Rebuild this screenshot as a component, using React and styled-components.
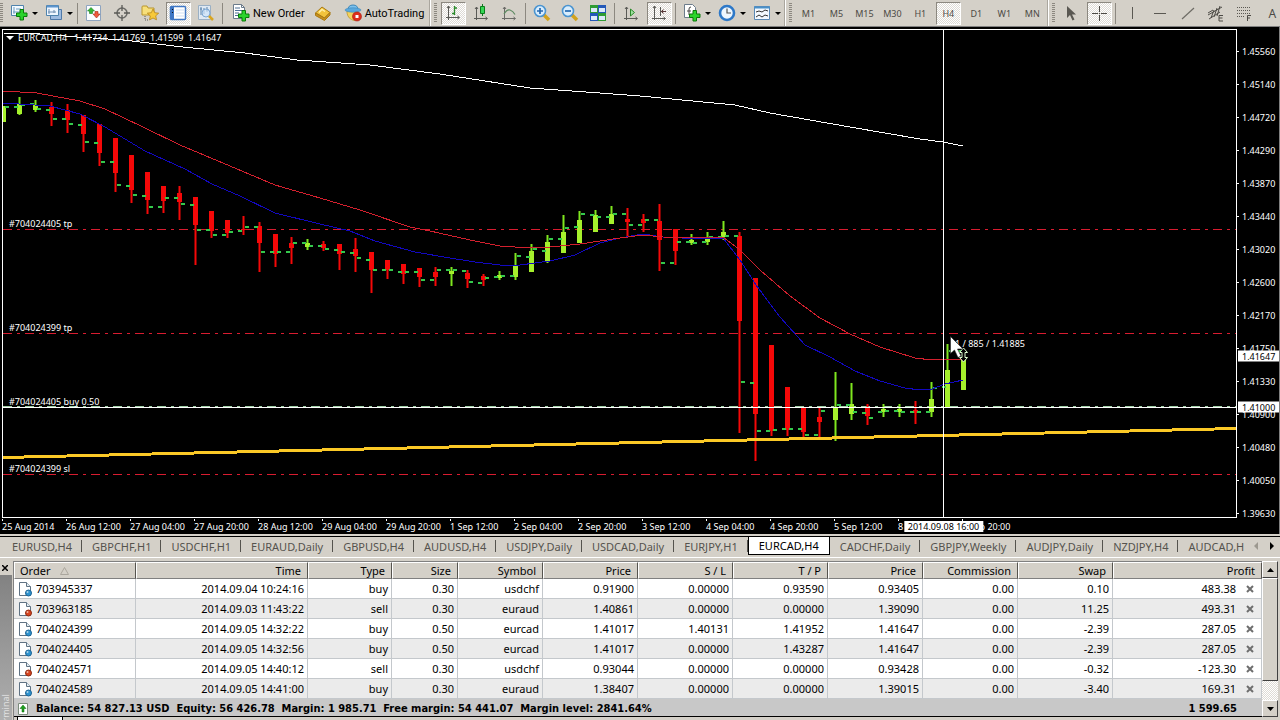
import React from 'react';
import styled, { createGlobalStyle, css } from 'styled-components';

const Global = createGlobalStyle`
  * { box-sizing: border-box; }
  body { margin: 0; background: #d4d0c8; font-family: "Noto Sans", "Open Sans", sans-serif; font-size: 11px; color: #000; }
  button { font: inherit; color: inherit; border: 0; padding: 0; margin: 0; background: none; cursor: default; }
`;

const dither = css`background: repeating-conic-gradient(#fff 0% 25%, #dedbd5 0% 50%) 0 0 / 2px 2px;`;

const Window = styled.div`
  height: 100vh;
  min-height: 480px;
  display: flex;
  flex-direction: column;
  overflow: hidden;
`;

/* ---------- toolbar ---------- */
const Toolbar = styled.header`
  height: 27px;
  flex: none;
  display: flex;
  align-items: center;
  overflow: hidden;
  background: #d4d0c8;
  border-bottom: 1px solid #808080;
`;
const Group = styled.div`
  display: flex;
  align-items: center;
  flex: none;
  height: 26px;
  padding-right: 2px;
  & + & { border-left: 1px solid #fff; box-shadow: -1px 0 0 #aaa69e; padding-left: 3px; }
`;
const Grip = styled.span`
  width: 3px;
  height: 20px;
  margin-right: 2px;
  background: repeating-linear-gradient(#8c8880 0 1px, #d4d0c8 1px 2px);
`;
const Separator = styled.span`
  width: 1px;
  height: 21px;
  margin: 0 2px;
  background: #8c8880;
`;
const Tool = styled.button`
  width: 28px;
  height: 24px;
  display: flex;
  align-items: center;
  justify-content: center;
  font-size: 9px;
  svg { display: block; }
`;
const ToolFace = styled.span`
  min-width: 25px;
  height: 23px;
  display: flex;
  align-items: center;
  justify-content: center;
  color: #4c4a45;
  border: 1px solid transparent;
  ${p => p.$large && css`font-size: 12px;`}
  ${p => p.$on && css`${dither} border-color: #8c8880 #fff #fff #8c8880;`}
`;
const MenuTool = styled.button`
  width: 35px;
  height: 24px;
  display: flex;
  align-items: center;
  gap: 4px;
  padding-left: 5px;
`;
const Caret = styled.span`
  border: 3px solid transparent;
  border-top-color: #000;
  border-bottom: 0;
`;
const TextTool = styled.button`
  height: 24px;
  display: flex;
  align-items: center;
  gap: 3px;
  padding: 0 4px 0 7px;
  font-family: Roboto, "Noto Sans", sans-serif;
  white-space: nowrap;
`;

/* ---------- chart ---------- */
const ChartPane = styled.main`
  flex: 1 1 0;
  min-height: 0;
  display: grid;
  grid-template-columns: 1fr 42px;
  grid-template-rows: 1fr 16px;
  padding: 2px 0 0 2px;
  background: #000;
  color: #fff;
  font-size: 9px;
  line-height: 11px;
  border-right: 1px solid #808080;
  overflow: hidden;
`;
const Plot = styled.section`
  position: relative;
  min-height: 0;
`;
const PlotSvg = styled.svg`
  display: block;
  position: absolute;
  inset: 0;
  width: 100%;
  height: 100%;
`;
const ChartTitle = styled.h1`
  position: absolute;
  top: 3px;
  left: 4px;
  margin: 0;
  display: flex;
  align-items: center;
  gap: 4px;
  font-size: 9px;
  font-weight: 400;
  white-space: pre;
`;
const TitleCaret = styled.span`
  border: 4px solid transparent;
  border-top-color: #fff;
  border-bottom: 0;
`;
const LevelLabel = styled.span`
  position: absolute;
  left: 7px;
  white-space: nowrap;
`;
const Pointer = styled.div`
  position: absolute;
  display: flex;
  white-space: nowrap;
  svg { position: absolute; left: -5px; top: -2px; }
`;
const PriceAxis = styled.aside`
  position: relative;
  display: flex;
  flex-direction: column;
  justify-content: space-between;
  padding-top: 18px;
  line-height: 9px;
`;
const PriceMark = styled.span`
  display: flex;
  align-items: center;
  gap: 3px;
  &::before { content: ''; width: 2px; height: 1px; background: #fff; }
`;
const PriceTag = styled.span`
  position: absolute;
  left: 1px;
  right: 0;
  padding-left: 4px;
  line-height: 11px;
  background: #fff;
  color: #000;
  transform: translateY(-50%);
`;
const TimeAxis = styled.footer`
  position: relative;
  display: flex;
`;
const TimeMark = styled.span`
  flex: 0 0 calc(100% * 64 / 1235);
  padding-top: 1px;
  line-height: 12px;
  white-space: nowrap;
  &::before { content: ''; display: block; width: 1px; height: 2px; background: #fff; }
`;
const TimeTag = styled.span`
  position: absolute;
  top: 3px;
  padding: 0 4px;
  line-height: 11px;
  background: #fff;
  color: #000;
  transform: translateX(-50%);
  white-space: nowrap;
`;

/* ---------- chart tabs ---------- */
const TabStrip = styled.nav`
  flex: none;
  height: 24px;
  display: flex;
  align-items: flex-start;
  padding-top: 3px;
  background: #d4d0c8;
  border-bottom: 1px solid #fff;
  box-shadow: inset 0 2px #d4d0c8, inset 0 3px #000;
`;
const TabList = styled.div`
  flex: 1;
  min-width: 0;
  display: flex;
  overflow: hidden;
  padding-left: 2px;
`;
const ChartTab = styled.button`
  flex: none;
  position: relative;
  height: 18px;
  padding: 0 10px;
  color: #55534e;
  &:not(:last-child)::after {
    content: '';
    position: absolute;
    right: 0;
    top: 3px;
    width: 1px;
    height: 12px;
    background: #55534e;
  }
  ${p => p.$active && css`
    background: #fff;
    color: #000;
    padding: 0 10px;
    border: solid #000;
    border-width: 0 1px 1px;
    &:not(:last-child)::after { display: none; }
  `}
`;
const TabScroll = styled.button`
  flex: none;
  width: 16px;
  height: 18px;
  display: flex;
  align-items: center;
  justify-content: center;
  color: ${p => (p.disabled ? '#9c988f' : '#000')};
`;

/* ---------- terminal ---------- */
const Terminal = styled.section`
  flex: none;
  display: grid;
  grid-template-columns: 13px 1fr;
  height: 162px;
  padding-top: 3px;
  background: #d4d0c8;
`;
const Side = styled.aside`
  display: flex;
  flex-direction: column;
  min-height: 0;
  overflow: hidden;
`;
const CloseTerminal = styled.button`
  height: 14px;
  display: flex;
  align-items: center;
  padding-left: 2px;
`;
const SideTitle = styled.h2`
  flex: 1;
  min-height: 0;
  margin: 0;
  font-size: 9px;
  font-weight: 400;
  line-height: 12px;
  color: #e0e0e0;
  background: linear-gradient(0deg, #828282, #b0b0b0);
  writing-mode: vertical-rl;
  transform: rotate(180deg);
  text-indent: -8px;
  border-left: 1px solid #d4d0c8;
`;
const Body = styled.div`
  display: grid;
  grid-template-columns: 1fr 16px;
  grid-template-rows: auto 1fr;
  padding-right: 2px;
  border-left: 1px solid #808080;
  min-width: 0;
`;
const Ledger = styled.div`
  min-width: 0;
  border-top: 1px solid #808080;
  border-bottom: 1px solid #000;
`;
const Table = styled.table`
  width: 100%;
  table-layout: fixed;
  border-collapse: separate;
  border-spacing: 0;
`;
const HeadCell = styled.th`
  height: 17px;
  padding: 0 6px 0 5px;
  font-weight: 400;
  line-height: 15px;
  text-align: ${p => (p.$left ? 'left' : 'right')};
  white-space: nowrap;
  background: #d4d0c8;
  border: solid;
  border-width: 1px;
  border-color: #fff #55534e #808080 #fff;
  svg { margin-left: 10px; }
`;
const Row = styled.tr`
  background: ${p => (p.$alt ? '#ebebeb' : '#fff')};
`;
const Cell = styled.td`
  height: 20px;
  padding: 0 3px 0 4px;
  line-height: 18px;
  text-align: right;
  white-space: nowrap;
  border-right: 1px solid #c4c8cc;
  border-bottom: 1px solid #c4c8cc;
`;
const CellLine = styled.span`
  display: flex;
  align-items: center;
  gap: ${p => p.$gap}px;
  justify-content: ${p => (p.$end ? 'flex-end' : 'flex-start')};
  padding-right: ${p => (p.$end ? 4 : 0)}px;
`;
const Summary = styled.div`
  height: 17px;
  display: flex;
  align-items: center;
  gap: 8px;
  padding: 2px 25px 0 4px;
  background: #c8c8c8;
  font-family: "DejaVu Sans Condensed", "DejaVu Sans", "Noto Sans", sans-serif;
  font-weight: 700;
  white-space: pre;
`;
const Total = styled.span`
  margin-left: auto;
`;
const ScrollBar = styled.div`
  display: flex;
  flex-direction: column;
  ${dither}
`;
const ScrollButton = styled.button`
  height: 17px;
  flex: none;
  display: flex;
  align-items: center;
  justify-content: center;
  background: #d4d0c8;
  border: 1px solid;
  border-color: #fff #404040 #404040 #fff;
`;
const Thumb = styled.div`
  height: 103px;
  background: #d4d0c8;
  border: 1px solid;
  border-color: #fff #404040 #404040 #fff;
`;
const Track = styled.div` flex: 1; `;
const PanelTabs = styled.div`
  grid-column: 1 / -1;
  padding-left: 3px;
  overflow: hidden;
`;
const PanelTab = styled.div`
  width: 46px;
  height: 6px;
  background: #fff;
  border: solid #000;
  border-width: 0 1px;
`;

/* ---------- icons ---------- */
const Ico = ({ children, w = 18, h = 18 }) => (
  <svg width={w} height={h} viewBox={`0 0 ${w} ${h}`} fill="none" aria-hidden="true">{children}</svg>
);
const Plus = ({ x, y }) => (
  <path transform={`translate(${x} ${y})`} d="M4 .5h3.500v3.500H11v3.500H7.500V11H4V7.500H.5V4H4z" fill="#2bd32b" stroke="#0a7a0a" />
);
const icons = {
  newChart: <Ico><path d="M1.500 1.500h12v10h-12z" fill="#f4faff" stroke="#4f83ad" /><path d="M4 3v7M3 8h8M6 5h5" stroke="#6c9cc2" /><Plus x={6} y={5} /></Ico>,
  profiles: <Ico><path d="M5.500 5.500h11v10h-11z" fill="#9dbbe0" stroke="#4f79a8" /><path d="M1.500 1.500h12v10h-12z" fill="#eef6ff" stroke="#4f83ad" /><path d="M2 2.500h11" stroke="#5c95cf" strokeWidth="2" /><path d="M4 5v5M3 8h8M9 6v3" stroke="#6c8cb0" /></Ico>,
  market: <Ico><path d="M1.500 1.500h14v15h-14z" fill="#fbfcff" stroke="#8ea4c0" /><path d="M6 3.500l3.500 3.500H7.500v2.500h-3V7h-2z" fill="#35b535" stroke="#14801f" strokeWidth=".6" /><path d="M10 7.500h3V10h2l-3.500 4L8 10h2z" fill="#ef5a3c" stroke="#a52a14" strokeWidth=".6" /></Ico>,
  dataWindow: <Ico><circle cx="9" cy="9" r="5" stroke="#6a6a66" strokeWidth="1.500" /><path d="M9 1v6M9 11v6M1 9h6M11 9h6" stroke="#5a5a56" strokeWidth="1.300" /></Ico>,
  navigator: <Ico><path d="M1 3q0-1 1-1h4l1 2h6v7H1z" fill="#f7df7a" stroke="#b9962c" /><path d="M4 12v4h4" stroke="#555" strokeDasharray="1 1" /><path d="M12 5l1.700 3.700 4 .5-3 2.600.8 4L12 14l-3.500 1.900.8-4-3-2.700 4-.5z" fill="#f7c93a" stroke="#b5851a" strokeWidth=".8" /></Ico>,
  terminal: <Ico><rect x="1.500" y="2.500" width="15" height="13" rx="1" fill="#fff" stroke="#3f77c4" strokeWidth="1.500" /><path d="M2 3h3v12H2z" fill="#3f77c4" /><path d="M3.500 5v1M3.500 8v1" stroke="#111" /><path d="M7 6h8M7 9h8M7 12h8" stroke="#cfdff2" /></Ico>,
  tester: <Ico><path d="M1.500 1.500h12v14h-12z" fill="#dfe9f3" stroke="#9bb0c4" /><path d="M4 3v8M7 4v6M10 3v5M3 5h2M9 6h3" stroke="#5d84ab" /><circle cx="9" cy="9" r="4" fill="#cfe4fa" fillOpacity=".7" stroke="#7da7d2" /><path d="M12 12l4 4" stroke="#d9a520" strokeWidth="2.500" /></Ico>,
  newOrder: <Ico><path d="M1.500.5h8l3 3v11h-11z" fill="#fff" stroke="#6b7b8b" /><path d="M9.500.5v3h3" stroke="#6b7b8b" /><path d="M3 4h5M3 6.500h7M3 9h4M3 11.500h3" stroke="#4e6f94" /><Plus x={6} y={6} /></Ico>,
  editor: <Ico><path d="M1.500 9L8 3l8 5.500L10.500 14z" fill="#f2c33c" stroke="#a87a14" /><path d="M1.500 9v2.500l9 5 5.500-5.500V8.500L10.500 14z" fill="#c9901c" stroke="#a87a14" /><path d="M5 8.500L8 5.500l3 2" stroke="#fff0a8" strokeWidth="1.500" /></Ico>,
  auto: <Ico><path d="M3 9q1 6 7 7.500 3-.5 4-4V7H3z" fill="#f3d25c" stroke="#b78f24" strokeWidth=".7" /><path d="M4 6q0-5 5-5t5 5z" fill="#7cc2ee" stroke="#3c86b8" /><ellipse cx="9" cy="6" rx="8" ry="2.200" fill="#5aa9de" stroke="#3c86b8" strokeWidth=".6" /><circle cx="13" cy="12.500" r="4.500" fill="#dc2f1e" stroke="#a41a10" strokeWidth=".6" /><path d="M11.500 11h3v3h-3z" fill="#fff" /></Ico>,
  bars: <Ico><path d="M4.500 2v14M2 13.500h13M3 4l1.500-2L6 4M13.500 12l2 1.500-2 1.500" stroke="#5a5a56" /><path d="M10.500 2v9M8 9.500h2.500M10.500 4H13" stroke="#2a8a2a" strokeWidth="1.300" /></Ico>,
  candles: <Ico><path d="M4.500 3v13M2 14.500h13M3 5l1.500-2L6 5M13.500 13l2 1.500-2 1.500" stroke="#5a5a56" /><path d="M10.500 0v12" stroke="#0c7a1c" /><path d="M8.500 2.500h4v7h-4z" fill="#35d655" stroke="#0c7a1c" /></Ico>,
  line: <Ico><path d="M4.500 3v13M2 14.500h13M3 5l1.500-2L6 5M13.500 13l2 1.500-2 1.500" stroke="#6a6a66" /><path d="M4 10q3-5 6-4t5 4.500" stroke="#5e8a62" strokeWidth="1.200" /></Ico>,
  zoomIn: <Ico><path d="M11 11l5 5" stroke="#d2a21c" strokeWidth="3.500" /><circle cx="7" cy="7" r="5.500" fill="#d9edfd" stroke="#4a94d0" strokeWidth="1.600" /><path d="M4 7h6M7 4v6" stroke="#2468b0" strokeWidth="1.700" /></Ico>,
  zoomOut: <Ico><path d="M11 11l5 5" stroke="#d2a21c" strokeWidth="3.500" /><circle cx="7" cy="7" r="5.500" fill="#d9edfd" stroke="#4a94d0" strokeWidth="1.600" /><path d="M4 7h6" stroke="#2468b0" strokeWidth="1.700" /></Ico>,
  tile: <Ico><path d="M1 1h8v8H1z" fill="#2f9c34" /><path d="M9 1h8v8H9zM1 9h8v8H1z" fill="#2458b8" /><path d="M9 9h8v8H9z" fill="#2f9c34" /><path d="M2 4h6v4H2zM10 4h6v4h-6zM2 12h6v4H2zM10 12h6v4h-6z" fill="#dce9fa" /></Ico>,
  shift: <Ico><path d="M4.500 3v13M2 14.500h13M3 5l1.500-2L6 5M13.500 13l2 1.500-2 1.500" stroke="#5a5a56" /><path d="M8.500 5l4 3.500-4 3.500z" fill="#9fe0a0" stroke="#2a8a2a" /></Ico>,
  chartShift: <Ico><path d="M4.500 2v14M2 14.500h13M3 4l1.500-2L6 4M13.500 13l2 1.500-2 1.500M10.500 3v9" stroke="#5a5a56" /><path d="M16 7.500h-5M13.500 5.500l-2 2 2 2" stroke="#5a3a3a" /></Ico>,
  indicators: <Ico><path d="M1.500.5h8l3 3v10h-11z" fill="#fff" stroke="#6b7b8b" /><path d="M6 11V5q0-2 2-2M4 7h4" stroke="#444" /><Plus x={6} y={6} /></Ico>,
  clock: <Ico><circle cx="9" cy="9" r="7" fill="#eef7ff" stroke="#2d78c8" strokeWidth="2.600" /><path d="M9 4.500V9h4" stroke="#555" strokeWidth="1.200" /></Ico>,
  template: <Ico><path d="M1.500 2.500h15v13h-15z" fill="#f4f9ff" stroke="#5a88b4" /><path d="M1 3.500h16" stroke="#4a90c8" strokeWidth="2" /><path d="M3 8l3-1 3 1 3-2 3 1M3 13l3-2 3 2 3-2 3 1" stroke="#333" /></Ico>,
  cursor: <Ico><path d="M5 2v12l3-3 2.500 5.500 2-1L10 10.500h4z" fill="#5a5852" /></Ico>,
  cross: <Ico><path d="M9.500 2v6M9.500 11v6M2 9.500h6M11 9.500h6M9 9.500h1" stroke="#4c4a45" /></Ico>,
  vline: <Ico><path d="M9.500 3v12" stroke="#5a5852" /></Ico>,
  hline: <Ico><path d="M3 9.500h12" stroke="#5a5852" /></Ico>,
  trend: <Ico><path d="M3 15L15 4" stroke="#6e6c66" strokeWidth="1.200" /></Ico>,
  channel: <Ico><path d="M1 11L15 3M2 15L13 8M4 14l3-8M7 13l3-9M10 12l3-10M1 9l5-3" stroke="#4c4a45" /><path d="M16 11.500h-4v5.500h4M12 14h3.500" stroke="#4c4a45" /></Ico>,
  fibo: <Ico><path d="M2 3.500h14M2 6.500h14M2 9.500h14M2 12.500h8" stroke="#5a5852" strokeDasharray="1 1" /><path d="M12.500 17v-5.500H16M12.500 14H15" stroke="#4c4a45" /></Ico>,
};
const DocIcon = ({ kind }) => (
  <svg width="15" height="16" viewBox="0 0 15 16" fill="none" aria-hidden="true">
    <path d="M1.500 1.500h7l4 4v9h-11z" fill="#fff" stroke="#5f7283" />
    <path d="M8.500 1.500v4h4" fill="#e4edf4" stroke="#5f7283" />
    <circle cx="10.500" cy="12" r="3" fill={kind === 'buy' ? '#2f93cf' : '#d6441f'} stroke={kind === 'buy' ? '#1b6496' : '#8e2a10'} />
    <circle cx="9.500" cy="11" r="1" fill="#fff" fillOpacity=".6" />
  </svg>
);
const CloseGlyph = () => (
  <svg width="8" height="8" viewBox="0 0 8 8" aria-hidden="true"><path d="M1 1l6 6M7 1L1 7" stroke="#6e6e6e" strokeWidth="2" /></svg>
);

/* ---------- data ---------- */
const PLOT = { left: 2, top: 29, width: 1235, height: 489 };
const TOP_PRICE = 1.4556;
const yOf = price => 51.5 + ((TOP_PRICE - price) * 462) / 0.0593;
const topPct = y => `${((y - PLOT.top) / PLOT.height) * 100}%`;
const bottomPct = y => `${100 - ((y - PLOT.top) / PLOT.height) * 100}%`;
const leftPct = x => `${((x - PLOT.left) / PLOT.width) * 100}%`;

/* high, body top, body bottom, low, rising, open mark, close mark */
const candles = [
  [106, 106, 122, 122, 1, 0, 106], [97, 104, 114, 115, 1, 106, 104], [100, 105, 110, 112, 1, 103, 108],
  [102, 107, 114, 126, 0, 109, 118], [104, 110, 120, 133, 0, 118, 123], [115, 115, 134, 152, 0, 124, 141],
  [124, 124, 153, 166, 0, 142, 161], [138, 138, 173, 192, 0, 161, 184], [155, 155, 190, 203, 0, 185, 194],
  [172, 172, 200, 214, 0, 195, 206], [186, 186, 201, 213, 0, 206, 197], [186, 193, 202, 220, 0, 197, 203],
  [197, 197, 225, 265, 0, 204, 229], [211, 211, 231, 238, 0, 229, 234], [220, 220, 233, 238, 0, 234, 231],
  [216, 229, 230, 235, 0, 230, 226], [222, 226, 243, 272, 0, 226, 251], [234, 234, 254, 267, 0, 251, 251],
  [237, 243, 248, 264, 0, 251, 242], [239, 243, 247, 250, 1, 242, 245], [241, 244, 248, 251, 0, 245, 248],
  [244, 244, 254, 270, 0, 249, 251], [238, 249, 256, 272, 0, 252, 257], [252, 252, 270, 293, 0, 259, 269],
  [260, 260, 270, 279, 0, 269, 269], [264, 264, 274, 284, 0, 271, 271], [268, 268, 277, 287, 0, 271, 279],
  [267, 272, 277, 286, 0, 279, 269], [267, 271, 274, 286, 1, 269, 269], [270, 273, 279, 288, 0, 270, 281],
  [274, 276, 280, 286, 0, 282, 277], [271, 275, 278, 280, 1, 276, 275], [253, 265, 277, 280, 1, 275, 255],
  [244, 251, 272, 272, 1, 256, 248], [235, 242, 262, 263, 1, 250, 238], [215, 232, 253, 253, 1, 238, 227],
  [211, 220, 243, 243, 1, 226, 213], [210, 215, 232, 232, 1, 214, 216], [206, 214, 224, 224, 1, 216, 213],
  [208, 219, 222, 237, 0, 213, 224], [214, 219, 223, 232, 0, 224, 219], [204, 221, 240, 271, 0, 219, 262],
  [229, 229, 251, 265, 0, 262, 241], [234, 240, 243, 245, 1, 241, 242], [232, 238, 242, 245, 1, 241, 236],
  [221, 232, 237, 240, 1, 236, 235], [232, 236, 321, 433, 0, 235, 381], [278, 278, 414, 461, 0, 382, 430],
  [345, 345, 431, 436, 0, 430, 429], [387, 387, 430, 436, 0, 428, 428], [408, 408, 432, 438, 0, 428, 434],
  [408, 417, 422, 438, 0, 434, 410], [372, 407, 420, 441, 1, 0, 404], [383, 404, 414, 420, 1, 404, 411],
  [404, 408, 416, 425, 0, 412, 417], [404, 409, 412, 417, 1, 411, 410], [404, 409, 412, 417, 1, 410, 411],
  [401, 410, 413, 424, 0, 411, 411], [382, 399, 412, 417, 1, 411, 387], [344, 370, 408, 408, 1, 386, 350],
  [353, 359, 390, 390, 1, 350, 0],
];
const slowLine = '3,33 40,34 77,37 123,40 183,47 245,53 297,60 370,65 440,74 530,88 600,93 640,96 735,105 770,113 850,127 920,139 943,142 963,146';
const redLine = '3,91 37,93 53,96 80,101 105,109 143,127 180,145 230,166 275,185 320,198 360,210 410,227 430,231 470,240 500,246 515,247 550,247 580,244 620,238 643,235 663,237 700,238 723,237 740,250 760,270 790,296 820,318 850,334 880,347 915,358 932,360 945,359 963,359';
const blueLine = '3,103 50,106 80,114 105,127 145,151 185,169 212,184 240,196 275,213 320,224 350,231 375,241 415,252 450,258 475,262 500,265 520,265 550,261 575,255 600,243 620,238 643,234 663,237 700,239 723,238 740,260 756,285 780,317 805,345 830,357 855,371 880,381 905,388 920,390 932,389 945,384 963,380';

const levels = [
  { price: 1.43287, text: '#704024405 tp' },
  { price: 1.41952, text: '#704024399 tp' },
  { price: 1.41, text: '#704024405 buy 0.50', entry: true },
  { price: 1.40131, text: '#704024399 sl' },
];
const levelY = l => (l.entry ? Math.floor(yOf(l.price)) : Math.round(yOf(l.price))) + 0.5;
const prices = ['1.45560', '1.45140', '1.44720', '1.44290', '1.43870', '1.43440', '1.43020', '1.42600', '1.42170', '1.41750', '1.41330', '1.40900', '1.40480', '1.40050', '1.39630'];
const times = ['25 Aug 2014', '26 Aug 12:00', '27 Aug 04:00', '27 Aug 20:00', '28 Aug 12:00', '29 Aug 04:00', '29 Aug 20:00', '1 Sep 12:00', '2 Sep 04:00', '2 Sep 20:00', '3 Sep 12:00', '4 Sep 04:00', '4 Sep 20:00', '5 Sep 12:00', '8 Sep 04:00', '8 Sep 20:00'];
const tabs = ['EURUSD,H4', 'GBPCHF,H1', 'USDCHF,H1', 'EURAUD,Daily', 'GBPUSD,H4', 'AUDUSD,H4', 'USDJPY,Daily', 'USDCAD,Daily', 'EURJPY,H1', 'EURCAD,H4', 'CADCHF,Daily', 'GBPJPY,Weekly', 'AUDJPY,Daily', 'NZDJPY,H4', 'AUDCAD,H'];
const columns = [['Order', 122], ['Time', 172], ['Type', 84], ['Size', 66], ['Symbol', 85], ['Price', 95], ['S / L', 95], ['T / P', 95], ['Price', 95], ['Commission', 95], ['Swap', 95], ['Profit', null]];
const orders = [
  ['703945337', '2014.09.04 10:24:16', 'buy', '0.30', 'usdchf', '0.91900', '0.00000', '0.93590', '0.93405', '0.00', '0.10', '483.38'],
  ['703963185', '2014.09.03 11:43:22', 'sell', '0.30', 'euraud', '1.40861', '0.00000', '0.00000', '1.39090', '0.00', '11.25', '493.31'],
  ['704024399', '2014.09.05 14:32:22', 'buy', '0.50', 'eurcad', '1.41017', '1.40131', '1.41952', '1.41647', '0.00', '-2.39', '287.05'],
  ['704024405', '2014.09.05 14:32:56', 'buy', '0.50', 'eurcad', '1.41017', '0.00000', '1.43287', '1.41647', '0.00', '-2.39', '287.05'],
  ['704024571', '2014.09.05 14:40:12', 'sell', '0.30', 'usdchf', '0.93044', '0.00000', '0.00000', '0.93428', '0.00', '-0.32', '-123.30'],
  ['704024589', '2014.09.05 14:41:00', 'buy', '0.30', 'euraud', '1.38407', '0.00000', '0.00000', '1.39015', '0.00', '-3.40', '169.31'],
];

/* ---------- pieces ---------- */
const IconTool = ({ icon, label, on }) => (
  <Tool aria-label={label} aria-pressed={on || undefined}><ToolFace $on={on}>{icons[icon]}</ToolFace></Tool>
);
const DropTool = ({ icon, label }) => (
  <MenuTool aria-label={label}>{icons[icon]}<Caret /></MenuTool>
);

const Candle = ({ x, data: [high, top, bottom, low, up, open, close] }) => {
  const color = up ? '#a6f02c' : '#f50808';
  return (
    <g>
      <rect x={x - 0.5} y={high} width="2" height={low - high} fill={up ? '#7fe61e' : '#f50808'} />
      <rect x={x - 2} y={top} width="5" height={bottom - top} fill={color} />
      {open > 0 && <rect x={x - 5} y={open} width="4" height="2" fill="#34c94c" />}
      {close > 0 && <rect x={x + 2} y={close} width="4" height="2" fill="#34c94c" />}
    </g>
  );
};

const Chart = () => (
  <ChartPane>
    <Plot>
      <PlotSvg viewBox="2 29 1235 489" preserveAspectRatio="none" role="img" aria-label="EURCAD four hour chart">
        {levels.map(l => (
          <path key={l.price} d={`M3 ${levelY(l)}H1236`} shapeRendering="crispEdges"
            stroke={l.entry ? '#9fd0a6' : '#d81c30'} strokeDasharray="9 5 3 5" />
        ))}
        {candles.map((c, i) => <Candle key={i} x={3 + 16 * i} data={c} />)}
        <g fill="none" shapeRendering="crispEdges">
          <polyline points={slowLine} stroke="#fff" />
          <polyline points={blueLine} stroke="#1208c0" />
          <polyline points={redLine} stroke="#d3202e" />
          <path d="M3 457.500L1236 428.500" stroke="#fbc926" strokeWidth="3" />
          <path d="M3 407.500H1236M943.500 30V517" stroke="#fff" />
          <path d="M2.500 29.500H1236.500V517.500H2.500z" stroke="#fff" />
        </g>
        <path d="M963.500 348l4 4.500h-2.500v5h2.500l-4 4.500-4-4.500h2.500v-5h-2.500z" fill="#000" stroke="#dfffd0" />
      </PlotSvg>
      <ChartTitle><TitleCaret />{'EURCAD,H4   1.41734  1.41769  1.41599  1.41647'}</ChartTitle>
      {levels.map(l => (
        <LevelLabel key={l.price} style={{ bottom: bottomPct(yOf(l.price)) }}>{l.text}</LevelLabel>
      ))}
      <Pointer style={{ left: leftPct(955), top: topPct(338) }}>
        1 / 885 / 1.41885
        <svg width="15" height="23" viewBox="0 0 15 23" aria-hidden="true">
          <path d="M.5.5v17l4-3.500 3.500 7.500 3-1.500-3.500-7H13z" fill="#fff" stroke="#222" strokeWidth=".6" />
        </svg>
      </Pointer>
    </Plot>
    <PriceAxis>
      {prices.map(p => <PriceMark key={p}>{p}</PriceMark>)}
      <PriceTag style={{ top: topPct(yOf(1.41647)) }}>1.41647</PriceTag>
      <PriceTag style={{ top: topPct(yOf(1.41)) }}>1.41000</PriceTag>
    </PriceAxis>
    <TimeAxis>
      {times.map(t => <TimeMark key={t}>{t}</TimeMark>)}
      <TimeTag style={{ left: leftPct(943.5) }}>2014.09.08 16:00</TimeTag>
    </TimeAxis>
  </ChartPane>
);

export default function App() {
  return (
    <Window>
      <Global />
      <Toolbar>
        <Group>
          <Grip />
          <DropTool icon="newChart" label="New chart" />
          <DropTool icon="profiles" label="Profiles" />
          <Separator />
          <IconTool icon="market" label="Market watch" />
          <IconTool icon="dataWindow" label="Data window" />
          <IconTool icon="navigator" label="Navigator" />
          <IconTool icon="terminal" label="Terminal" on />
          <IconTool icon="tester" label="Strategy tester" />
          <Separator />
          <TextTool>{icons.newOrder}New Order</TextTool>
          <IconTool icon="editor" label="Editor" />
          <TextTool>{icons.auto}AutoTrading</TextTool>
        </Group>
        <Group>
          <Grip />
          <IconTool icon="bars" label="Bar chart" on />
          <IconTool icon="candles" label="Candlesticks" />
          <IconTool icon="line" label="Line chart" />
          <Separator />
          <IconTool icon="zoomIn" label="Zoom in" />
          <IconTool icon="zoomOut" label="Zoom out" />
          <IconTool icon="tile" label="Tile windows" />
          <Separator />
          <IconTool icon="shift" label="Auto scroll" />
          <IconTool icon="chartShift" label="Chart shift" on />
          <Separator />
          <DropTool icon="indicators" label="Indicators" />
          <DropTool icon="clock" label="Periods" />
          <DropTool icon="template" label="Templates" />
        </Group>
        <Group>
          <Grip />
          {['M1', 'M5', 'M15', 'M30', 'H1', 'H4', 'D1', 'W1', 'MN'].map(t => (
            <Tool key={t} aria-pressed={t === 'H4'}><ToolFace $on={t === 'H4'}>{t}</ToolFace></Tool>
          ))}
        </Group>
        <Group>
          <Grip />
          <IconTool icon="cursor" label="Cursor" />
          <IconTool icon="cross" label="Crosshair" on />
          <Separator />
          <IconTool icon="vline" label="Vertical line" />
          <IconTool icon="hline" label="Horizontal line" />
          <IconTool icon="trend" label="Trendline" />
          <IconTool icon="channel" label="Channel" />
          <IconTool icon="fibo" label="Fibonacci" />
          <Tool><ToolFace $large>A</ToolFace></Tool>
        </Group>
      </Toolbar>

      <Chart />

      <TabStrip>
        <TabList>
          {tabs.map(t => <ChartTab key={t} $active={t === 'EURCAD,H4'}>{t}</ChartTab>)}
        </TabList>
        <TabScroll disabled aria-label="Scroll left"><svg width="4" height="8"><path d="M4 0v8L0 4z" fill="currentColor" /></svg></TabScroll>
        <TabScroll aria-label="Scroll right"><svg width="4" height="8"><path d="M0 0v8l4-4z" fill="currentColor" /></svg></TabScroll>
      </TabStrip>

      <Terminal>
        <Side>
          <CloseTerminal aria-label="Close terminal">
            <svg width="6" height="6"><path d="M0 0l6 6M6 0L0 6" stroke="#000" strokeWidth="1.500" /></svg>
          </CloseTerminal>
          <SideTitle>Terminal</SideTitle>
        </Side>
        <Body>
          <Ledger>
            <Table>
              <colgroup>{columns.map(([n, w], i) => <col key={i} width={w || undefined} />)}</colgroup>
              <thead>
                <tr>
                  {columns.map(([n], i) => (
                    <HeadCell key={i} $left={i === 0} scope="col">
                      {n}{i === 0 && <svg width="9" height="8"><path d="M.5 7.500L4.500.5l4 7z" fill="none" stroke="#aaa69e" /></svg>}
                    </HeadCell>
                  ))}
                </tr>
              </thead>
              <tbody>
                {orders.map((o, r) => (
                  <Row key={o[0]} $alt={r % 2 === 1}>
                    {o.map((v, i) => (
                      <Cell key={i}>
                        {i === 0 ? <CellLine $gap={3}><DocIcon kind={o[2]} />{v}</CellLine>
                          : i === 11 ? <CellLine $gap={10} $end>{v}<button aria-label={`Close order ${o[0]}`}><CloseGlyph /></button></CellLine>
                            : v}
                      </Cell>
                    ))}
                  </Row>
                ))}
              </tbody>
            </Table>
            <Summary>
              <svg width="10" height="12" viewBox="0 0 10 12"><path d="M.5.5h9v11h-9z" fill="#fff" stroke="#7c8c7c" /><path d="M5 2l3 3.500H6V9H4V5.500H2z" fill="#1fa01f" stroke="#0b6b0b" strokeWidth=".5" /></svg>
              {'Balance: 54 827.13 USD  Equity: 56 426.78  Margin: 1 985.71  Free margin: 54 441.07  Margin level: 2841.64%'}
              <Total>1 599.65</Total>
            </Summary>
          </Ledger>
          <ScrollBar>
            <ScrollButton aria-label="Scroll up"><svg width="7" height="4"><path d="M0 4h7L3.500 0z" /></svg></ScrollButton>
            <Thumb />
            <Track />
            <ScrollButton aria-label="Scroll down"><svg width="7" height="4"><path d="M0 0h7L3.500 4z" /></svg></ScrollButton>
          </ScrollBar>
          <PanelTabs><PanelTab /></PanelTabs>
        </Body>
      </Terminal>
    </Window>
  );
}
